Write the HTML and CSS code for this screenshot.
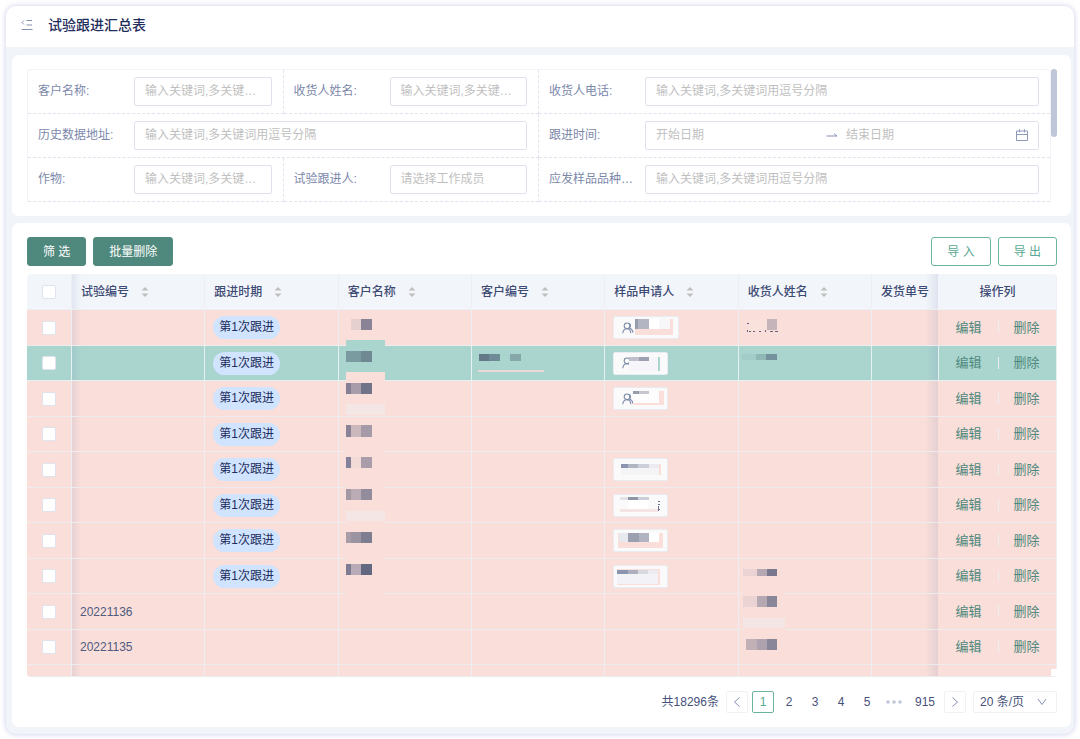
FILE: index.html
```html
<!DOCTYPE html>
<html lang="zh-CN">
<head>
<meta charset="utf-8">
<meta name="viewport" content="width=device-width, initial-scale=1">
<title>试验跟进汇总表</title>
<link rel="stylesheet" href="styles.css">
</head>
<body>
<svg width="0" height="0" class="defs" aria-hidden="true">
  <symbol id="sort" viewBox="0 0 8 12"><path d="M4 1 7.5 4.5h-7zM4 11 .5 7.5h7z" fill="#bfbfbf"/></symbol>
  <symbol id="people" viewBox="0 0 12 12"><g fill="none" stroke="#7f8cab" stroke-width="1.1"><circle cx="5" cy="3.8" r="2.8"/><path d="M.8 11.2c.2-2.4 1.700-4.400 4.200-4.400s3.600 2 3.800 4.400M6.500 1.200c2.200.4 2.800 3.200 1 4.800 2 .8 3.200 2.600 3.500 4.600"/></g></symbol>
</svg>
<div class="window">
  <header class="topbar">
    <button class="fold" type="button" aria-label="收起菜单"><svg width="12" height="12" viewBox="0 0 12 12"><path d="M5.500 1.500H11M5.500 6H11M.500 10.500H11.500M3 1.500 1 3.500l2 2" fill="none" stroke="#8490b0"/></svg></button>
    <h1>试验跟进汇总表</h1>
  </header>
  <main>
    <form class="panel filter-panel">
      <div class="filters">
        <div class="field"><label for="f1">客户名称:</label><input class="box" id="f1" placeholder="输入关键词,多关键词用逗号分隔"></div>
        <div class="field"><label for="f2">收货人姓名:</label><input class="box" id="f2" placeholder="输入关键词,多关键词用逗号分隔"></div>
        <div class="field last wide"><label for="f3">收货人电话:</label><input class="box" id="f3" placeholder="输入关键词,多关键词用逗号分隔"></div>
        <div class="field wide"><label for="f4">历史数据地址:</label><input class="box" id="f4" placeholder="输入关键词,多关键词用逗号分隔"></div>
        <div class="field last wide"><label for="f5">跟进时间:</label>
          <div class="box range">
            <input id="f5" placeholder="开始日期">
            <svg width="12" height="10" viewBox="0 0 12 10"><path d="M.500 6H11L8 3.500" fill="none" stroke="#8490b0"/></svg>
            <input aria-label="结束日期" placeholder="结束日期">
            <svg width="12" height="12" viewBox="0 0 12 12"><path d="M.500 2h11v9.500H.500zM.500 5.500h11M3.500.300v3M8.500.300v3" fill="none" stroke="#8f9ab8"/></svg>
          </div>
        </div>
        <div class="field"><label for="f6">作物:</label><input class="box" id="f6" placeholder="输入关键词,多关键词用逗号分隔"></div>
        <div class="field"><label for="f7">试验跟进人:</label><input class="box" id="f7" placeholder="请选择工作成员"></div>
        <div class="field last wide"><label for="f8">应发样品品种名称:</label><input class="box" id="f8" placeholder="输入关键词,多关键词用逗号分隔"></div>
      </div>
      <div class="scroll"><div class="thumb"></div></div>
    </form>

    <section class="panel list-panel">
      <div class="toolbar">
        <button type="button" class="btn primary">筛 选</button>
        <button type="button" class="btn primary">批量删除</button>
        <span class="spacer"></span>
        <button type="button" class="btn">导 入</button>
        <button type="button" class="btn">导 出</button>
      </div>
      <div class="table-wrap">
        <table>
          <colgroup><col class="c-check"><col><col><col><col><col><col><col class="c-ship"><col class="c-act"></colgroup>
          <thead>
            <tr>
              <th class="check"><input type="checkbox" aria-label="全选"></th>
              <th class="edge-left">试验编号<svg class="sort"><use href="#sort"/></svg></th>
              <th>跟进时期<svg class="sort"><use href="#sort"/></svg></th>
              <th>客户名称<svg class="sort"><use href="#sort"/></svg></th>
              <th>客户编号<svg class="sort"><use href="#sort"/></svg></th>
              <th>样品申请人<svg class="sort"><use href="#sort"/></svg></th>
              <th>收货人姓名<svg class="sort"><use href="#sort"/></svg></th>
              <th class="edge-right">发货单号</th>
              <th class="act">操作列</th>
            </tr>
          </thead>
          <tbody>
            <tr>
              <td class="check"><input type="checkbox" aria-label="选择第1行"></td><td class="edge-left"></td><td><span class="stage">第1次跟进</span></td>
              <td class="anchor"><svg class="mosaic" width="60" height="300" viewBox="339 310 60 300" shape-rendering="crispEdges">
                <path fill="#f9deda" d="M346 372h39v32h-39zM346 447h39v8h-39zM346 483h39v6h-39zM346 520h39v6h-39zM346 554h39v8h-39zM346 590h39v6h-39z"/>
                <path fill="#a9d5ce" d="M346 340h39v32h-39z"/>
                <path fill="#f3e6e5" d="M346 404h39v11h-39zM346 511h39v10h-39z"/>
                <path fill="#e6cfcf" d="M351 319h10v11h-10z"/><path fill="#8a8295" d="M361 319h11v11h-11z"/>
                <path fill="#7a9ba0" d="M346 351h15v11h-15z"/><path fill="#6f8892" d="M361 351h11v11h-11z"/>
                <path fill="#857f93" d="M346 383h5v11h-5z"/><path fill="#a99caa" d="M351 383h10v11h-10z"/><path fill="#717389" d="M361 383h11v11h-11z"/>
                <path fill="#8b8499" d="M346 425h5v12h-5z"/><path fill="#cbb8bd" d="M351 425h10v12h-10z"/><path fill="#a59aa8" d="M361 425h11v12h-11z"/>
                <path fill="#84829a" d="M346 457h5v11h-5z"/><path fill="#f2dad7" d="M351 457h10v11h-10z"/><path fill="#a99da9" d="M361 457h11v11h-11z"/>
                <path fill="#a598a5" d="M346 489h5v11h-5z"/><path fill="#baabb5" d="M351 489h10v11h-10z"/><path fill="#938c9d" d="M361 489h11v11h-11z"/>
                <path fill="#a79ca8" d="M346 532h5v11h-5z"/><path fill="#9c93a2" d="M351 532h10v11h-10z"/><path fill="#7e7d92" d="M361 532h11v11h-11z"/>
                <path fill="#7e7b93" d="M346 564h5v11h-5z"/><path fill="#b8aab6" d="M351 564h10v11h-10z"/><path fill="#62687f" d="M361 564h11v11h-11z"/>
              </svg></td>
              <td class="anchor"><svg class="mosaic" width="80" height="80" viewBox="472 310 80 80" shape-rendering="crispEdges">
                <path fill="#637987" d="M479 354h10v7h-10z"/><path fill="#6f8b96" d="M489 354h11v7h-11z"/><path fill="#86a8ab" d="M510 354h11v7h-11z"/><path fill="#ead8d5" d="M478 370h66v2h-66z"/>
              </svg></td>
              <td class="anchor"><span class="person long"><svg><use href="#people"/></svg></span><svg class="mosaic" width="80" height="290" viewBox="605 310 80 290" shape-rendering="crispEdges">
                <path fill="#f9deda" d="M635 319h38v16h-38z"/><path fill="#989dae" d="M635 319h3v10h-3z"/><path fill="#b4b5c2" d="M638 319h11v10h-11z"/><path fill="#fff" d="M649 319h10v10h-10z"/><path fill="#f7f6f8" d="M659 319h11v10h-11z"/>
                <path fill="#f5f5fa" d="M629 357h29v14h-29z"/><path fill="#bfc0cb" d="M629 357h10v4h-10z"/><path fill="#9b9fb0" d="M639 357h10v4h-10z"/><path fill="#aad5cf" d="M658 357h2v14h-2z"/>
                <path fill="#f9deda" d="M659 391h5v13h-5zM633 403h31v2h-31z"/><path fill="#fdfdfe" d="M633 391h26v12h-26z"/><path fill="#989baa" d="M633 391h6v3h-6z"/><path fill="#c5c6cf" d="M639 391h10v3h-10z"/>
              </svg></td>
              <td class="anchor"><svg class="mosaic" width="80" height="350" viewBox="739 310 80 350" shape-rendering="crispEdges">
                <path fill="#f9deda" d="M743 590h42v6h-42zM743 628h42v4h-42z"/>
                <path fill="#f3e6e5" d="M743 618h42v10h-42z"/>
                <path fill="#fae2dc" d="M749 319h18v11h-18z"/><path fill="#c6b4bb" d="M767 319h10v11h-10z"/>
                <path fill="#62637e" d="M747 323h2v1h-2zM747 330h1v2h-1zM749 331h2v1h-2zM753 331h2v1h-2zM759 331h2v1h-2zM765 330h1v2h-1zM770 331h3v1h-3zM775 331h3v1h-3z"/>
                <path fill="#a2ccc7" d="M742 354h14v6h-14z"/><path fill="#8fb7b6" d="M756 354h10v6h-10z"/><path fill="#74919d" d="M766 354h11v6h-11z"/>
                <path fill="#ecd3d3" d="M743 569h14v7h-14zM743 596h14v11h-14z"/><path fill="#b5a8b2" d="M757 569h10v7h-10zM757 596h10v11h-10z"/><path fill="#7a788e" d="M767 569h10v7h-10z"/><path fill="#898699" d="M767 596h10v11h-10zM767 639h10v11h-10z"/>
                <path fill="#c2b0b7" d="M746 639h11v11h-11z"/><path fill="#aea2ae" d="M757 639h10v11h-10z"/>
              </svg></td>
              <td class="edge-right"></td><td class="act"><a href="#">编辑</a><a href="#">删除</a></td>
            </tr>
            <tr class="selected">
              <td class="check"><input type="checkbox" aria-label="选择第2行"></td><td class="edge-left"></td><td><span class="stage">第1次跟进</span></td><td></td><td></td>
              <td><span class="person"><svg><use href="#people"/></svg></span></td><td></td><td class="edge-right"></td><td class="act"><a href="#">编辑</a><a href="#">删除</a></td>
            </tr>
            <tr>
              <td class="check"><input type="checkbox" aria-label="选择第3行"></td><td class="edge-left"></td><td><span class="stage">第1次跟进</span></td><td></td><td></td>
              <td><span class="person"><svg><use href="#people"/></svg></span></td><td></td><td class="edge-right"></td><td class="act"><a href="#">编辑</a><a href="#">删除</a></td>
            </tr>
            <tr>
              <td class="check"><input type="checkbox" aria-label="选择第4行"></td><td class="edge-left"></td><td><span class="stage">第1次跟进</span></td><td></td><td></td><td></td><td></td><td class="edge-right"></td><td class="act"><a href="#">编辑</a><a href="#">删除</a></td>
            </tr>
            <tr>
              <td class="check"><input type="checkbox" aria-label="选择第5行"></td><td class="edge-left"></td><td><span class="stage">第1次跟进</span></td><td></td><td></td>
              <td class="anchor"><span class="person"></span><svg class="mosaic" width="80" height="140" viewBox="605 452 80 140" shape-rendering="crispEdges">
                <path fill="#f4f4f6" d="M621 464h38v11h-38z"/><path fill="#8b94ae" d="M621 464h7v4h-7z"/><path fill="#b1b6c3" d="M628 464h10v4h-10z"/><path fill="#cdd0d8" d="M638 464h11v4h-11z"/><path fill="#ececf0" d="M649 464h10v4h-10z"/><path fill="#f9deda" d="M659 464h2v11h-2z"/>
                <path fill="#e2e2e8" d="M620 497h8v3h-8z"/><path fill="#8e95a5" d="M628 497h10v3h-10z"/><path fill="#cdcfd8" d="M638 497h11v3h-11z"/><path fill="#fff" d="M628 500h20v9h-20z"/><path fill="#f4e5e4" d="M620 509h38v3h-38z"/><path fill="#6d718f" d="M658 501h2v1h-2zM658 504h2v1h-2zM658 506h1v5h-1zM659 509h1v1h-1z"/>
                <path fill="#f9deda" d="M618 533h45v15h-45z"/><path fill="#e7e9ee" d="M619 533h9v9h-9z"/><path fill="#9ba0b0" d="M628 533h11v9h-11z"/><path fill="#b1b4c0" d="M639 533h10v9h-10z"/><path fill="#fff" d="M649 533h10v9h-10z"/>
                <path fill="#f9deda" d="M617 569h43v16h-43z"/><path fill="#f3f2f6" d="M617 574h41v10h-41z"/><path fill="#8c95b0" d="M617 570h11v4h-11z"/><path fill="#adb0be" d="M628 570h10v4h-10z"/><path fill="#d9d9e0" d="M638 570h10v4h-10z"/><path fill="#ececf0" d="M648 570h10v4h-10z"/>
              </svg></td><td></td><td class="edge-right"></td><td class="act"><a href="#">编辑</a><a href="#">删除</a></td>
            </tr>
            <tr>
              <td class="check"><input type="checkbox" aria-label="选择第6行"></td><td class="edge-left"></td><td><span class="stage">第1次跟进</span></td><td></td><td></td><td><span class="person"></span></td><td></td><td class="edge-right"></td><td class="act"><a href="#">编辑</a><a href="#">删除</a></td>
            </tr>
            <tr>
              <td class="check"><input type="checkbox" aria-label="选择第7行"></td><td class="edge-left"></td><td><span class="stage">第1次跟进</span></td><td></td><td></td><td><span class="person"></span></td><td></td><td class="edge-right"></td><td class="act"><a href="#">编辑</a><a href="#">删除</a></td>
            </tr>
            <tr>
              <td class="check"><input type="checkbox" aria-label="选择第8行"></td><td class="edge-left"></td><td><span class="stage">第1次跟进</span></td><td></td><td></td><td><span class="person"></span></td><td></td><td class="edge-right"></td><td class="act"><a href="#">编辑</a><a href="#">删除</a></td>
            </tr>
            <tr>
              <td class="check"><input type="checkbox" aria-label="选择第9行"></td><td class="edge-left">20221136</td><td></td><td></td><td></td><td></td><td></td><td class="edge-right"></td><td class="act"><a href="#">编辑</a><a href="#">删除</a></td>
            </tr>
            <tr>
              <td class="check"><input type="checkbox" aria-label="选择第10行"></td><td class="edge-left">20221135</td><td></td><td></td><td></td><td></td><td></td><td class="edge-right"></td><td class="act"><a href="#">编辑</a><a href="#">删除</a></td>
            </tr>
            <tr class="cut">
              <td></td><td class="edge-left"></td><td></td><td></td><td></td><td></td><td></td><td class="edge-right"></td><td></td>
            </tr>
          </tbody>
        </table>
        <span class="corner"></span>
      </div>
      <nav class="pager" aria-label="分页">
        <span class="total">共18296条</span>
        <button type="button" class="page arrow" aria-label="上一页"><svg width="8" height="12" viewBox="0 0 8 12"><path d="M6.500 1.500 1.500 6l5 4.500" fill="none" stroke="#8490b0"/></svg></button>
        <button type="button" class="page current">1</button>
        <button type="button" class="page">2</button>
        <button type="button" class="page">3</button>
        <button type="button" class="page">4</button>
        <button type="button" class="page">5</button>
        <span class="page dots"><svg width="16" height="4" viewBox="0 0 16 4"><g fill="#bfc6da"><circle cx="2" cy="2" r="1.800"/><circle cx="8" cy="2" r="1.800"/><circle cx="14" cy="2" r="1.800"/></g></svg></span>
        <button type="button" class="page">915</button>
        <button type="button" class="page arrow" aria-label="下一页"><svg width="8" height="12" viewBox="0 0 8 12"><path d="M1.500 1.500 6.500 6l-5 4.500" fill="none" stroke="#8490b0"/></svg></button>
        <span class="size"><select aria-label="每页条数"><option>20 条/页</option></select><svg width="10" height="8" viewBox="0 0 10 8"><path d="M1 1 5 6.500 9 1" fill="none" stroke="#8490b0"/></svg></span>
      </nav>
    </section>
  </main>
</div>
</body>
</html>
```

FILE: styles.css
```css
* { box-sizing: border-box; }

body {
  margin: 0;
  padding: 6px;
  background: #fff;
  color: #46527a;
  font: 12px/20px "Liberation Sans", "Noto Sans CJK SC", sans-serif;
}

button, input, select { font: inherit; color: inherit; margin: 0; }
.defs { position: absolute; }

.window {
  background: #f1f5fa;
  border-radius: 10px;
  box-shadow: 0 0 5px 1px #d9d9ef;
  overflow: hidden;
}

.topbar {
  display: flex;
  align-items: center;
  gap: 15px;
  height: 41px;
  padding: 0 15px 3px;
  background: #fff;
}
.fold { display: flex; padding: 0; border: 0; background: none; }
h1 { margin: 0; font-size: 14px; font-weight: 500; color: #1f2d5c; }

main {
  display: flex;
  flex-direction: column;
  gap: 7px;
  padding: 8px 3px 7px 6px;
}
.panel { background: #fff; border-radius: 7px; padding: 14px 14px 14px 15px; }

/* Filter form */
.filter-panel { display: flex; }
.filters {
  flex: 1;
  display: grid;
  grid-template-columns: repeat(4, 1fr);
  border: 1px solid #f2f3f8;
  border-bottom: 0;
  border-radius: 4px 4px 0 0;
}
.field {
  display: flex;
  align-items: center;
  height: 44px;
  min-width: 0;
  padding: 0 11px 1px 10px;
  border-right: 1px dashed #e0e2ee;
  border-bottom: 1px dashed #e0e2ee;
}
.field.wide { grid-column: span 2; }
.field.last { border-right: 0; }
.field label {
  flex: none;
  width: 96px;
  padding-right: 8px;
  color: #7c88aa;
  overflow: hidden;
  white-space: nowrap;
  text-overflow: ellipsis;
}
.box {
  flex: 1;
  min-width: 0;
  height: 29px;
  padding: 0 10px;
  border: 1px solid #dfe2ee;
  border-radius: 2px;
  background: #fff;
}
input::placeholder { color: #bfbfbf; opacity: 1; }
input:placeholder-shown { text-overflow: ellipsis; }
.range { display: flex; align-items: center; gap: 8px; }
.range input { flex: 1; min-width: 0; padding: 0; border: 0; background: none; }
.scroll { width: 6px; }
.thumb { height: 68px; border-radius: 3px; background: #bfc6da; }

/* Toolbar */
.toolbar { display: flex; gap: 7px; margin-bottom: 8px; }
.spacer { flex: 1; }
.btn {
  height: 29px;
  padding: 0 15px;
  border: 1px solid #69b3a0;
  border-radius: 3px;
  background: #fff;
  color: #5aa994;
}
.btn.primary { border-color: #4f897d; background: #4f897d; color: #fff; }

/* Table */
.table-wrap { position: relative; overflow: hidden; border-radius: 4px; }
table { width: 100%; table-layout: fixed; border-collapse: separate; border-spacing: 0; }
.c-check { width: 45px; }
.c-ship { width: 67px; }
.c-act { width: 118px; }
th, td {
  padding: 0 8px;
  text-align: left;
  white-space: nowrap;
  border-right: 1px solid #edeef3;
  border-bottom: 1px solid #ebebf0;
}
th {
  height: 36px;
  padding: 0 9px;
  font-weight: 500;
  color: #3d4a73;
  background-color: #f2f6fb;
  border-color: #eceff5;
}
td { background-color: #f9deda; color: #4f5b80; }
.selected td { background-color: #aad5cf; border-color: #e6f0f0; }
tbody tr { height: 36px; }
tbody tr:nth-child(even) { height: 35px; }
tbody tr.cut { height: 12px; }
.edge-left { background-image: linear-gradient(to right, rgba(120, 130, 170, .14), transparent 9px); }
.edge-right {
  background-image: linear-gradient(to left, rgba(120, 130, 170, .16), transparent 12px);
  border-right-color: transparent;
}
th.check, td.check, th.act, td.act { text-align: center; padding: 0; }
.sort { width: 8px; height: 12px; margin-left: 12px; vertical-align: -2px; }

input[type="checkbox"] {
  appearance: none;
  display: block;
  width: 14px;
  height: 14px;
  margin: 0 auto;
  border: 1px solid #dfe3ef;
  border-radius: 2px;
  background: #fff;
}
.stage {
  display: block;
  width: fit-content;
  padding: 0 6px;
  border-radius: 12px;
  background: #d0e4ff;
  color: #1d2c5c;
  line-height: 23px;
}
.person {
  display: flex;
  align-items: center;
  width: 55px;
  height: 23px;
  padding: 0 8px;
  border: 1px solid #e9ecf2;
  border-radius: 2px;
  background: #fafafb;
}
.person.long { width: 66px; }
.person svg { width: 12px; height: 12px; }
.anchor { position: relative; }
.mosaic { position: absolute; top: 0; left: 0; }

.act a { font-size: 13px; color: #4f897d; text-decoration: none; }
.act a + a { margin-left: 16px; padding-left: 16px; background: linear-gradient(#eceef3, #eceef3) left center / 1px 12px no-repeat; }
.corner { position: absolute; right: 0; bottom: 1px; width: 6px; height: 7px; background: #fff; }

/* Pagination */
.pager {
  display: flex;
  justify-content: flex-end;
  align-items: center;
  gap: 4px;
  margin-top: 14px;
}
.total { margin-right: 3px; }
.page {
  display: flex;
  align-items: center;
  justify-content: center;
  min-width: 22px;
  height: 22px;
  padding: 0 5px;
  border: 0;
  border-radius: 2px;
  background: #fff;
}
.page.arrow { border: 1px solid #f0f1f6; }
.page.current { border: 1px solid #69b3a0; color: #5aa994; }
.page.dots { width: 24px; padding: 0; }
.size {
  display: flex;
  align-items: center;
  height: 22px;
  margin-left: 3px;
  padding: 0 9px 0 6px;
  border: 1px solid #f0f1f6;
  border-radius: 2px;
}
.size select { appearance: none; width: 57px; padding: 0; border: 0; background: none; }
```
